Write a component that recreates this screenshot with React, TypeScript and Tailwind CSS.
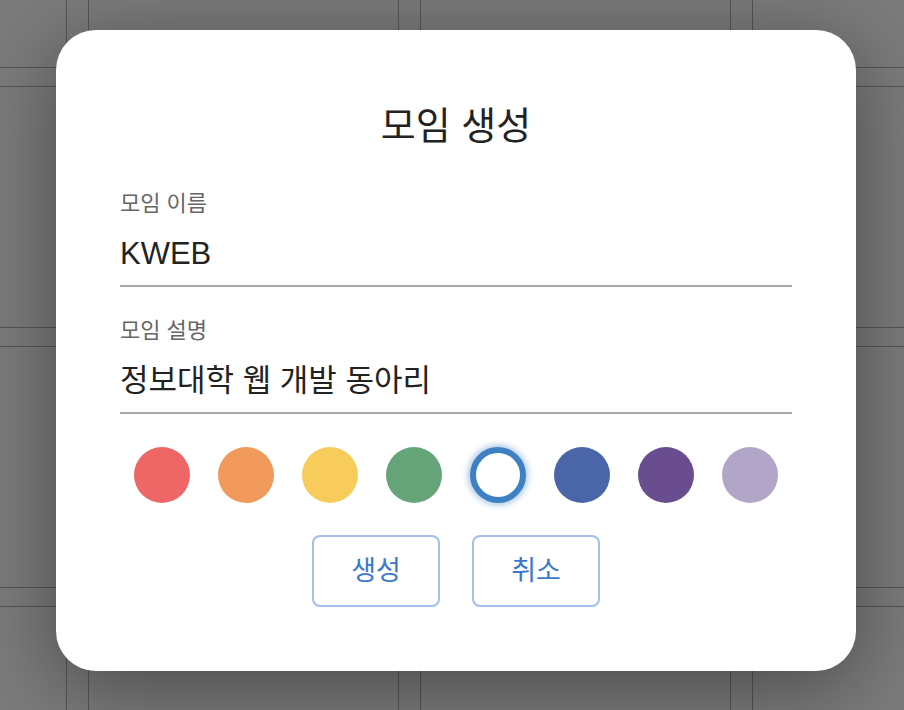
import React from 'react';

const COLORS = ['#ee6666', '#f2995c', '#f8cc5a', '#66a579', '#3d80c4', '#4a66a8', '#694d8f', '#b2a6c8'];
const SELECTED = 4;

const font = { fontFamily: '"Liberation Sans", "Noto Sans CJK KR", sans-serif' };

const Field: React.FC<{ label: string; value: string; className?: string }> = ({ label, value, className }) => (
  <div className={className}>
    <label className="block text-[22px] leading-[30px] text-[#666]">{label}</label>
    <input
      readOnly
      value={value}
      className="mt-[15px] block w-full bg-transparent pb-[11px] text-[31px] leading-[40px] text-[#222] outline-none border-b-2 border-[#a8a8a8]"
      style={font}
    />
  </div>
);

const App: React.FC = () => {
  return (
    <div className="relative h-[710px] w-[904px] overflow-hidden bg-[#7b7b7b]" style={font}>
      {/* calendar behind the overlay */}
      <div className="ml-[-244px] mt-[-174px] grid grid-cols-[311px_311px_311px_311px] gap-x-[21px] gap-y-[18px]">
        {Array.from({ length: 16 }).map((_, i) => (
          <div key={i} className="h-[242px] border border-[#555]" />
        ))}
      </div>

      <div className="absolute left-[56px] top-[30px] flex h-[641px] w-[800px] flex-col rounded-[40px] bg-white px-[64px] pt-[74px] shadow-[0_16px_80px_rgba(0,0,0,0.4)]">
        <h1 className="text-center text-[38px] font-normal leading-[44px] text-[#222]">모임 생성</h1>

        <Field label="모임 이름" value="KWEB" className="mt-[41px]" />
        <Field label="모임 설명" value="정보대학 웹 개발 동아리" className="mt-[29px]" />

        <div className="mt-[33px] flex justify-center gap-[28px]">
          {COLORS.map((c, i) =>
            i === SELECTED ? (
              <div
                key={c}
                className="h-[56px] w-[56px] rounded-full border-[6px] border-[#3d80c4] bg-white shadow-[0_0_6px_2px_rgba(61,128,196,0.45)]"
              />
            ) : (
              <div key={c} className="h-[56px] w-[56px] rounded-full" style={{ backgroundColor: c }} />
            )
          )}
        </div>

        <div className="mt-[32px] flex justify-center gap-[32px]">
          <button className="h-[72px] w-[128px] rounded-[8px] border-2 border-[#a3c0ea] bg-white text-[27px] font-normal text-[#3a78cf]">
            생성
          </button>
          <button className="h-[72px] w-[128px] rounded-[8px] border-2 border-[#a3c0ea] bg-white text-[27px] font-normal text-[#3a78cf]">
            취소
          </button>
        </div>
      </div>
    </div>
  );
};

export default App;
